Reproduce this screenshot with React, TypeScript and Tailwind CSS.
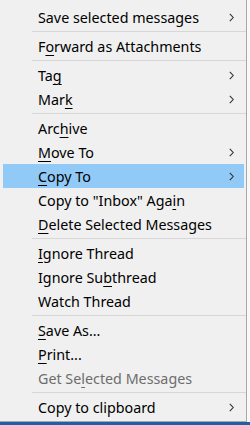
import React from 'react';

type Item =
    | { kind: 'sep' }
    | { kind: 'item'; label: string; key?: number; sub?: boolean; active?: boolean; disabled?: boolean };

const items: Item[] = [
    { kind: 'item', label: 'Save selected messages', sub: true },
    { kind: 'sep' },
    { kind: 'item', label: 'Forward as Attachments', key: 1 },
    { kind: 'sep' },
    { kind: 'item', label: 'Tag', key: 2, sub: true },
    { kind: 'item', label: 'Mark', key: 3, sub: true },
    { kind: 'sep' },
    { kind: 'item', label: 'Archive', key: 3 },
    { kind: 'item', label: 'Move To', key: 0, sub: true },
    { kind: 'item', label: 'Copy To', key: 0, sub: true, active: true },
    { kind: 'item', label: 'Copy to "Inbox" Again', key: 19 },
    { kind: 'item', label: 'Delete Selected Messages', key: 0 },
    { kind: 'sep' },
    { kind: 'item', label: 'Ignore Thread', key: 0 },
    { kind: 'item', label: 'Ignore Subthread', key: 9 },
    { kind: 'item', label: 'Watch Thread' },
    { kind: 'sep' },
    { kind: 'item', label: 'Save As...', key: 0 },
    { kind: 'item', label: 'Print...', key: 0 },
    { kind: 'item', label: 'Get Selected Messages', key: 6, disabled: true },
    { kind: 'sep' },
    { kind: 'item', label: 'Copy to clipboard', sub: true },
];

function Label({ text, at }: { text: string; at?: number }) {
    if (at === undefined) return <span className="pt-[2px]">{text}</span>;
    return (
        <span className="pt-[2px]">
            {text.slice(0, at)}
            <span className="underline decoration-1 underline-offset-[3px]">{text[at]}</span>
            {text.slice(at + 1)}
        </span>
    );
}

function Chevron() {
    return (
        <svg width="5" height="9" viewBox="0 0 5 9" className="shrink-0">
            <path d="M0.8 0.8 L4.2 4.5 L0.8 8.2" fill="none" stroke="#333" strokeWidth="1.1" />
        </svg>
    );
}

export default function App() {
    return (
        <div
            className="w-[250px] h-[425px] bg-[#1f5fa6] flex flex-col overflow-hidden"
            style={{ fontFamily: '"Noto Sans", "Open Sans", sans-serif' }}
        >
            <div className="h-[422px] flex bg-[#f9f9f9]">
                <div className="w-[247px] bg-[#f0f0f0] border-r border-b border-[#a8a8a8] pt-[5px] flex flex-col">
                    {items.map((it, i) =>
                        it.kind === 'sep' ? (
                            <div key={i} className="ml-[32px] my-[2px] h-px bg-[#d7d7d7]" />
                        ) : (
                            <div
                                key={i}
                                className={
                                    'h-[24px] ml-[3px] mr-[2px] pl-[35px] pr-[10px] flex items-center justify-between text-[14.3px] leading-none ' +
                                    (it.active ? 'bg-[#91c9f7] ' : '') +
                                    (it.disabled ? 'text-[#6d6d6d]' : 'text-black')
                                }
                            >
                                <Label text={it.label} at={it.key} />
                                {it.sub && <Chevron />}
                            </div>
                        )
                    )}
                </div>
            </div>
        </div>
    );
}
